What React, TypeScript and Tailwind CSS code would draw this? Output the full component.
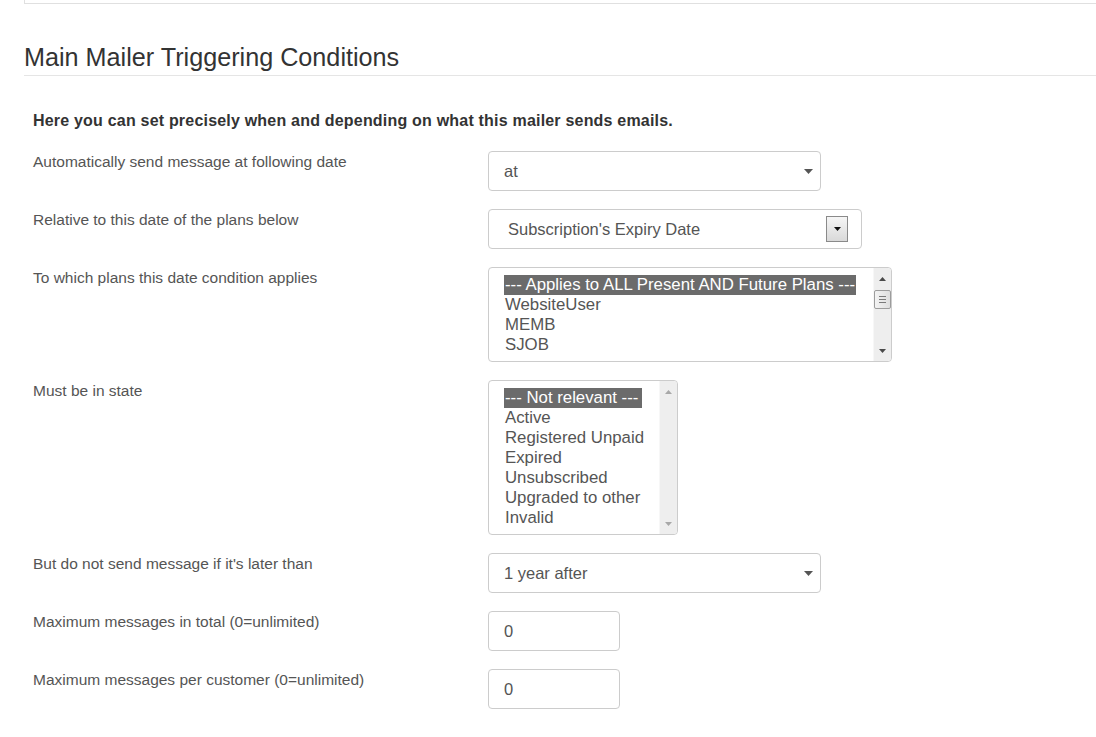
import React from "react";

function Caret({ color = "#555" }: { color?: string }) {
  return (
    <svg width="9" height="5" viewBox="0 0 9 5">
      <path d="M0 0 L9 0 L4.5 5 Z" fill={color} />
    </svg>
  );
}

function SelectBox({ text, width }: { text: string; width: string }) {
  return (
    <div
      className={`${width} h-[40px] border border-[#cccccc] rounded-[4px] bg-white flex items-center pl-[15px] pr-[7px] text-[16.5px] text-[#555]`}
    >
      <span className="flex-1">{text}</span>
      <Caret />
    </div>
  );
}

function ScrollBar({ thumb, disabled }: { thumb: boolean; disabled: boolean }) {
  const arrow = disabled ? "#a8a8a8" : "#4a4a4a";
  return (
    <div className="w-[18px] self-stretch bg-[#eeeeee] border-l border-[#f7f7f7] flex flex-col items-center rounded-r-[3px]">
      <div className="h-[17px] flex items-center justify-center mt-[2px]">
        <svg width="7" height="4" viewBox="0 0 7 4">
          <path d="M0 4 L7 4 L3.5 0 Z" fill={arrow} />
        </svg>
      </div>
      {thumb && (
        <div className="mt-[3px] w-[17px] h-[19px] border border-[#9c9c9c] rounded-[2px] bg-gradient-to-r from-[#f3f3f3] to-[#dedede] flex flex-col items-center justify-center gap-[2px]">
          <div className="w-[7px] h-[1px] bg-[#7a7a7a]" />
          <div className="w-[7px] h-[1px] bg-[#7a7a7a]" />
          <div className="w-[7px] h-[1px] bg-[#7a7a7a]" />
        </div>
      )}
      <div className="flex-1" />
      <div className="h-[17px] flex items-center justify-center mb-[2px]">
        <svg width="7" height="4" viewBox="0 0 7 4">
          <path d="M0 0 L7 0 L3.5 4 Z" fill={arrow} />
        </svg>
      </div>
    </div>
  );
}

function ListBox({
  items,
  width,
  height,
  innerWidth,
  thumb,
}: {
  items: string[];
  width: string;
  height: string;
  innerWidth: string;
  thumb: boolean;
}) {
  return (
    <div
      className={`${width} ${height} border border-[#cccccc] rounded-[4px] bg-white flex overflow-hidden`}
    >
      <div className="flex-1 pl-[15px] pt-[7px] overflow-hidden">
        <div className={`${innerWidth} flex flex-col text-[16.8px] leading-[20px] text-[#555]`}>
          {items.map((it, i) => (
            <div
              key={i}
              className={
                i === 0
                  ? "bg-[#6b6b6b] text-white pl-[1px] whitespace-nowrap overflow-hidden"
                  : "pl-[1px] whitespace-nowrap"
              }
            >
              {it}
            </div>
          ))}
        </div>
      </div>
      <ScrollBar thumb={thumb} disabled={!thumb} />
    </div>
  );
}

function Row({ label, children }: { label: string; children: React.ReactNode }) {
  return (
    <div className="flex items-start">
      <div className="w-[455px] text-[15.5px] leading-[20px] text-[#555] pt-[1px]">{label}</div>
      {children}
    </div>
  );
}

function NumInput() {
  return (
    <div className="w-[132px] h-[40px] border border-[#cccccc] rounded-[4px] bg-white flex items-center pl-[15px] text-[16.5px] text-[#555]">
      0
    </div>
  );
}

export default function App() {
  return (
    <div className="w-[1096px] h-[737px] bg-white overflow-hidden font-['Liberation_Sans',Arial,sans-serif]">
      <div className="pl-[24px]">
        <div className="h-[4px] border-l border-b border-[#e0e0e0]" />
        <h2 className="mt-[40px] text-[25.2px] leading-[27px] pb-[4px] border-b border-[#e5e5e5] text-[#333] font-normal">
          Main Mailer Triggering Conditions
        </h2>
        <div className="pl-[9px]">
          <p className="mt-[35px] text-[16px] tracking-[0.2px] leading-[20px] font-bold text-[#333]">
            Here you can set precisely when and depending on what this mailer sends emails.
          </p>
          <div className="mt-[20px] flex flex-col gap-[18px]">
            <Row label="Automatically send message at following date">
              <SelectBox text="at" width="w-[333px]" />
            </Row>
            <Row label="Relative to this date of the plans below">
              <div className="w-[374px] h-[40px] border border-[#cccccc] rounded-[4px] bg-white flex items-center pl-[19px] pr-[13px] text-[16.5px] text-[#555]">
                <span className="flex-1">Subscription's Expiry Date</span>
                <div className="w-[22px] h-[26px] border border-[#8a8a8a] bg-gradient-to-b from-[#f6f6f6] to-[#d9d9d9] flex items-center justify-center">
                  <svg width="7" height="4" viewBox="0 0 7 4">
                    <path d="M0 0 L7 0 L3.5 4 Z" fill="#111" />
                  </svg>
                </div>
              </div>
            </Row>
            <Row label="To which plans this date condition applies">
              <ListBox
                items={[
                  "--- Applies to ALL Present AND Future Plans ---",
                  "WebsiteUser",
                  "MEMB",
                  "SJOB",
                ]}
                width="w-[404px]"
                height="h-[95px]"
                innerWidth="w-[352px]"
                thumb={true}
              />
            </Row>
            <Row label="Must be in state">
              <ListBox
                items={[
                  "--- Not relevant ---",
                  "Active",
                  "Registered Unpaid",
                  "Expired",
                  "Unsubscribed",
                  "Upgraded to other",
                  "Invalid",
                ]}
                width="w-[190px]"
                height="h-[155px]"
                innerWidth="w-[138px]"
                thumb={false}
              />
            </Row>
            <Row label="But do not send message if it's later than">
              <SelectBox text="1 year after" width="w-[333px]" />
            </Row>
            <Row label="Maximum messages in total (0=unlimited)">
              <NumInput />
            </Row>
            <Row label="Maximum messages per customer (0=unlimited)">
              <NumInput />
            </Row>
          </div>
        </div>
      </div>
    </div>
  );
}
